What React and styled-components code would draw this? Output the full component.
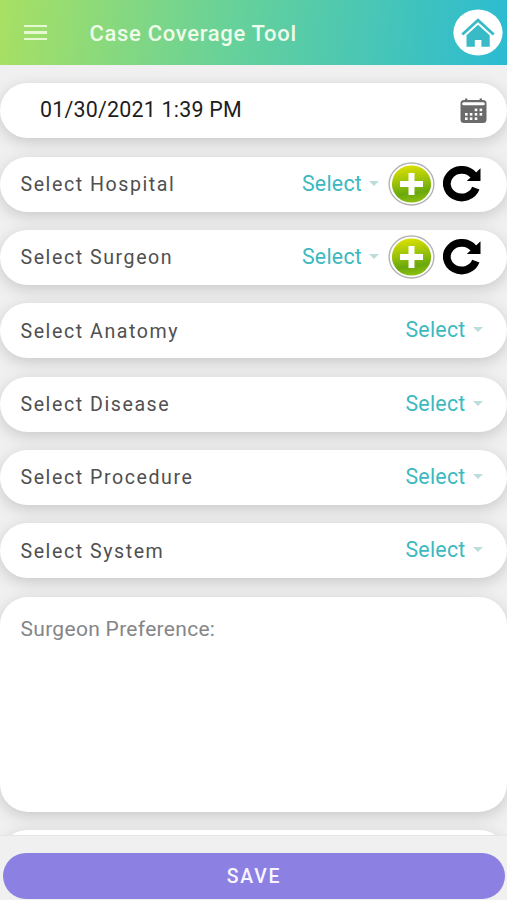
import React from "react";
import styled, { createGlobalStyle } from "styled-components";

const GlobalStyle = createGlobalStyle`
  * {
    box-sizing: border-box;
  }
  body {
    margin: 0;
    font-family: Roboto, "Liberation Sans", sans-serif;
    background: #f0f0f0;
  }
`;

const Screen = styled.div`
  display: flex;
  flex-direction: column;
  height: 900px;
  overflow: hidden;
`;

const Header = styled.header`
  display: flex;
  align-items: center;
  flex: none;
  height: 65px;
  padding: 0 4px 0 24px;
  background: linear-gradient(97deg, #a8e063 0%, #66d19a 46%, #2bbbd2 100%);
`;

const MenuButton = styled.div`
  display: flex;
  flex-direction: column;
  gap: 4px;
  width: 23px;
`;

const MenuBar = styled.span`
  height: 2.6px;
  background: #e4f8d2;
`;

const Title = styled.h1`
  flex: 1;
  margin: 1px 0 0 42.5px;
  font-size: 22px;
  font-weight: 500;
  letter-spacing: 0.68px;
  color: #effce9;
`;

const Content = styled.main`
  display: flex;
  flex-direction: column;
  gap: 18.35px;
  flex: 1;
  min-height: 0;
  padding-top: 18.3px;
  overflow: hidden;
`;

const Card = styled.div`
  display: flex;
  align-items: ${({ $top }) => ($top ? "flex-start" : "center")};
  flex: none;
  height: ${({ $height }) => $height || 55}px;
  padding: ${({ $padding }) => $padding || "0 24.5px 0 20.5px"};
  border-radius: 28px;
  background: #fff;
  box-shadow: 0 4px 15px rgba(0, 0, 0, 0.17);
`;

const DateText = styled.span`
  flex: 1;
  margin-top: -2px;
  font-size: 21.4px;
  letter-spacing: 0.22px;
  color: #1d1d1d;
`;

const Label = styled.span`
  flex: 1;
  padding-top: 0.5px;
  font-size: 19.6px;
  letter-spacing: 1.55px;
  color: #505050;
`;

const Dropdown = styled.div`
  display: flex;
  align-items: center;
  gap: 7px;
  margin-top: -2px;
  font-size: 21.3px;
  letter-spacing: 0.25px;
  color: #3cb9c0;
`;

const Caret = styled.span`
  border: 5.5px solid transparent;
  border-top: 5px solid #bcdedb;
  border-bottom: 0;
`;

const Actions = styled.div`
  display: flex;
  align-items: center;
  gap: 8px;
  margin-left: 9px;
`;

const Placeholder = styled.span`
  font-size: 21px;
  line-height: 24px;
  letter-spacing: 0.3px;
  color: #858589;
`;

const Footer = styled.footer`
  flex: none;
  height: 65px;
  padding: 17px 2px 0 3px;
  border-top: 1px solid #e6e6e6;
  background: #f0f0f0;
`;

const SaveButton = styled.button`
  display: block;
  width: 100%;
  height: 46px;
  padding: 0;
  border: 0;
  border-radius: 23px;
  background: #8d80e3;
  color: #f7f5ff;
  font-family: inherit;
  font-size: 19.4px;
  font-weight: 500;
  letter-spacing: 1.8px;
`;

const HomeIcon = () => (
  <svg width="50" height="47" viewBox="0 0 50 47">
    <ellipse cx="25" cy="23.5" rx="24.6" ry="23" fill="#fff" />
    <path d="M9.3 25.5L25 11.2L40.7 25.5" fill="none" stroke="#38bbc6" strokeWidth="2.8" />
    <path d="M13.5 26.3L25 15.8L36.7 26.3V37.8H28.4V31H21.8V37.8H13.5Z" fill="#38bbc6" />
  </svg>
);

const CalendarIcon = () => (
  <svg width="27" height="26" viewBox="0 0 27 26">
    <path d="M5 0.5h2.4v1.5h12.2V0.5H22v1.5h1a3.5 3.5 0 0 1 3.5 3.5V21.5a3.5 3.5 0 0 1-3.5 3.5H4a3.5 3.5 0 0 1-3.5-3.5V5.5A3.5 3.5 0 0 1 4 2h1z" fill="#6b6b6b" />
    <rect x="2.2" y="4.3" width="22.6" height="3" rx="1.5" fill="#fff" />
    <g fill="#fff">
      <rect x="14.7" y="10.6" width="2.6" height="2.6" />
      <rect x="19.6" y="10.6" width="2.6" height="2.6" />
      <rect x="5" y="15" width="2.6" height="2.6" />
      <rect x="9.8" y="15" width="2.6" height="2.6" />
      <rect x="14.7" y="15" width="2.6" height="2.6" />
      <rect x="19.6" y="15" width="2.6" height="2.6" />
      <rect x="5" y="19.4" width="2.6" height="2.6" />
      <rect x="9.8" y="19.4" width="2.6" height="2.6" />
      <rect x="14.7" y="19.4" width="2.6" height="2.6" />
    </g>
  </svg>
);

const AddIcon = () => (
  <svg width="47" height="44" viewBox="0 0 47 44">
    <defs>
      <linearGradient id="addFill" x1="0.4" y1="0" x2="0.55" y2="1">
        <stop offset="0" stopColor="#dce000" />
        <stop offset="0.5" stopColor="#8fbd0b" />
        <stop offset="0.75" stopColor="#69a80c" />
        <stop offset="1" stopColor="#8fc010" />
      </linearGradient>
    </defs>
    <ellipse cx="23.5" cy="22" rx="22.4" ry="21" fill="#fff" stroke="#b3b3b3" strokeWidth="1.4" />
    <ellipse cx="23.5" cy="22" rx="19.6" ry="18.6" fill="url(#addFill)" />
    <path d="M20.5 11h6v8h8.5v6h-8.5v8h-6v-8H12v-6h8.5z" fill="#fff" />
  </svg>
);

const ReloadIcon = () => (
  <svg width="38" height="36" viewBox="0 0 38 36">
    <path d="M32.8 22.2A14.9 13.8 0 1 1 30.5 9.2" fill="none" stroke="#000" strokeWidth="7.8" />
    <path d="M37.5 2.3V15H23.8L28 11L26 5L32.8 6.8z" fill="#000" />
  </svg>
);

const SelectRow = ({ label, actions }) => (
  <Card $padding={actions ? "0 26px 0 20.5px" : undefined}>
    <Label>{label}</Label>
    <Dropdown>
      Select
      <Caret />
    </Dropdown>
    {actions && (
      <Actions>
        <AddIcon />
        <ReloadIcon />
      </Actions>
    )}
  </Card>
);

const App = () => {
  return (
    <>
      <GlobalStyle />
      <Screen>
        <Header>
          <MenuButton>
            <MenuBar />
            <MenuBar />
            <MenuBar />
          </MenuButton>
          <Title>Case Coverage Tool</Title>
          <HomeIcon />
        </Header>
        <Content>
          <Card $padding="0 20px 0 40px">
            <DateText>01/30/2021 1:39 PM</DateText>
            <CalendarIcon />
          </Card>
          <SelectRow label="Select Hospital" actions />
          <SelectRow label="Select Surgeon" actions />
          <SelectRow label="Select Anatomy" />
          <SelectRow label="Select Disease" />
          <SelectRow label="Select Procedure" />
          <SelectRow label="Select System" />
          <Card $top $height={215} $padding="20px 20.5px">
            <Placeholder>Surgeon Preference:</Placeholder>
          </Card>
          <Card />
        </Content>
        <Footer>
          <SaveButton>SAVE</SaveButton>
        </Footer>
      </Screen>
    </>
  );
};

export default App;
